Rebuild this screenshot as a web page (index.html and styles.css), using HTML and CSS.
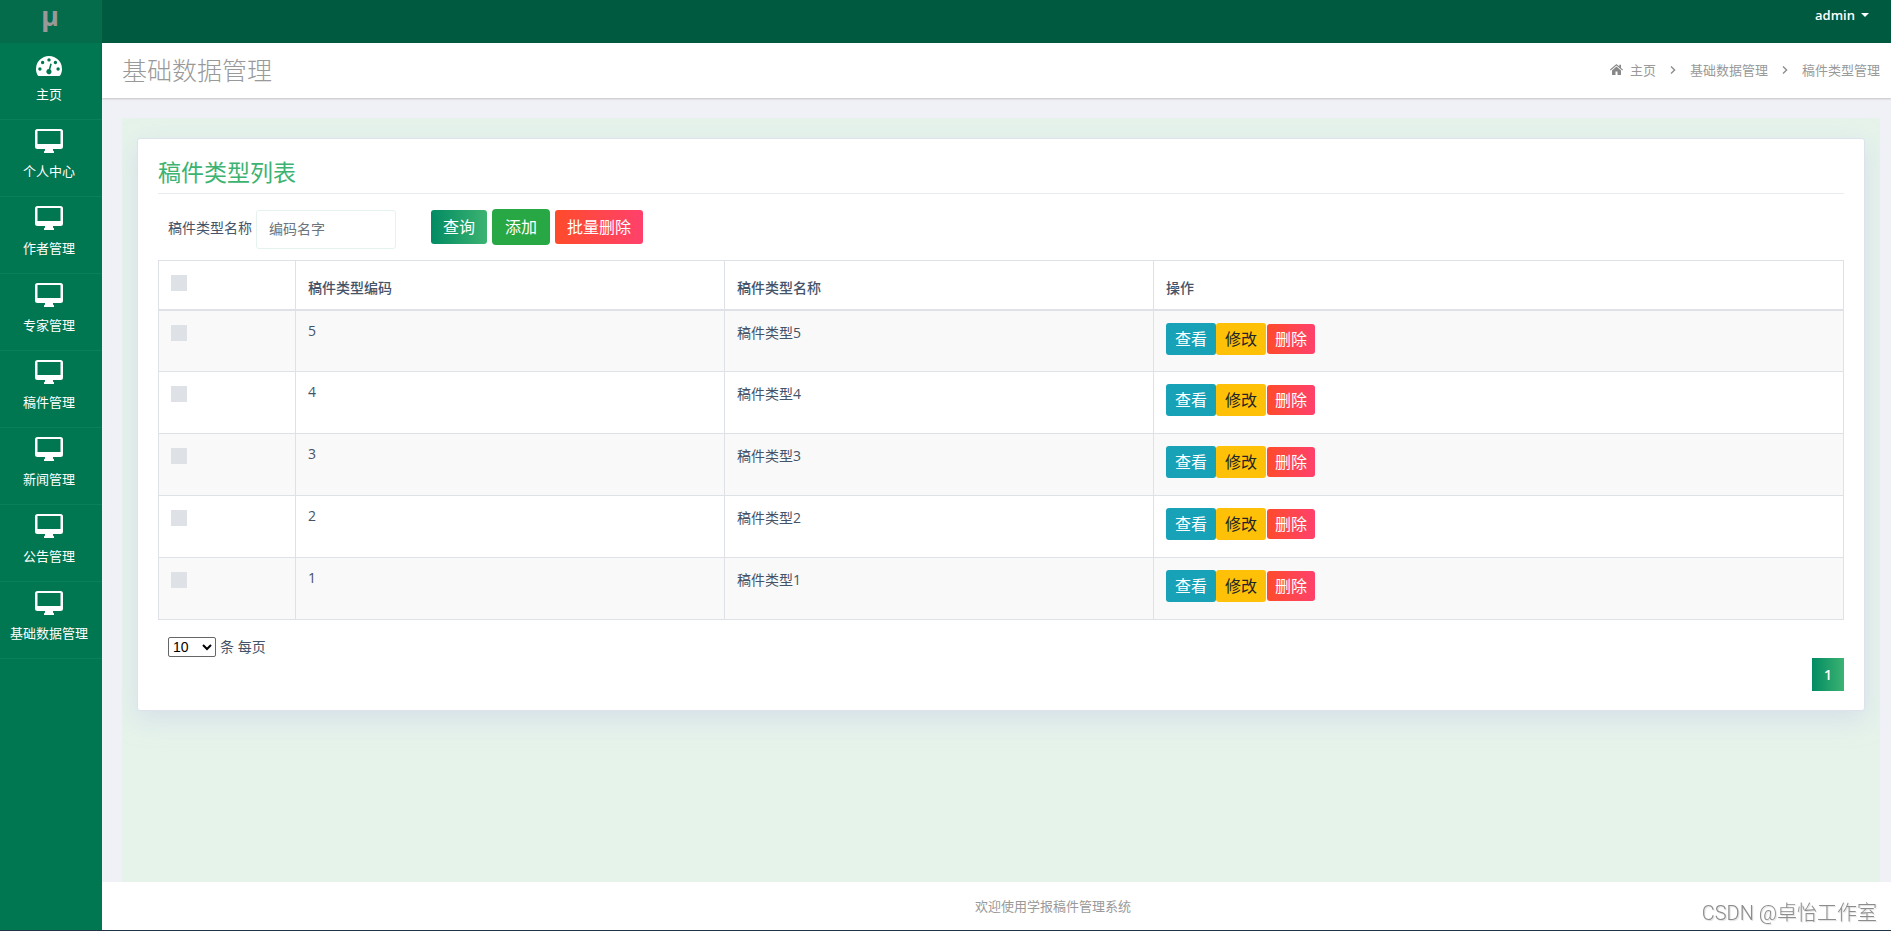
FILE: index.html
```
<!DOCTYPE html>
<html lang="zh-CN">
<head>
<meta charset="utf-8">
<title>稿件类型管理</title>
<link rel="stylesheet" href="styles.css">
</head>
<body>
<svg class="sprite" aria-hidden="true">
  <symbol id="monitor" viewBox="0 0 28 24"><path fill-rule="evenodd" d="M2.500 0h23a2.500 2.500 0 0 1 2.500 2.500v15a2.500 2.500 0 0 1-2.500 2.500H18v1.500l1 1V24H9v-1.500l1-1V20H2.500A2.500 2.500 0 0 1 0 17.500v-15A2.500 2.500 0 0 1 2.500 0zM2.500 2v13h23V2z"/></symbol>
  <symbol id="gauge" viewBox="0 0 26 20"><path fill-rule="evenodd" d="M13 0a13 13 0 0 1 13 13c0 2.600-.7 4.900-1.900 6.500-.2.300-.5.500-.9.500H2.800c-.4 0-.7-.2-.9-.5C.7 17.900 0 15.600 0 13A13 13 0 0 1 13 0zM13 2.200a1.700 1.700 0 1 0 0 3.400 1.700 1.700 0 0 0 0-3.400zM6.600 4.800a1.700 1.700 0 1 0 0 3.400 1.700 1.700 0 0 0 0-3.400zM19.400 4.800a1.700 1.700 0 1 0 0 3.400 1.700 1.700 0 0 0 0-3.400zM3.900 11.300a1.700 1.700 0 1 0 0 3.400 1.700 1.700 0 0 0 0-3.400zM22.100 11.300a1.700 1.700 0 1 0 0 3.400 1.700 1.700 0 0 0 0-3.400zM14.300 7.500l-1.500 5.600a2.600 2.600 0 1 0 1.500.4l1.500-5.600z"/></symbol>
</svg>
<div class="app">
  <aside class="sidebar">
    <div class="brand">µ</div>
    <nav>
      <a class="nav-item" href="#"><svg class="gauge"><use href="#gauge"/></svg><span>主页</span></a>
      <a class="nav-item" href="#"><svg><use href="#monitor"/></svg><span>个人中心</span></a>
      <a class="nav-item" href="#"><svg><use href="#monitor"/></svg><span>作者管理</span></a>
      <a class="nav-item" href="#"><svg><use href="#monitor"/></svg><span>专家管理</span></a>
      <a class="nav-item" href="#"><svg><use href="#monitor"/></svg><span>稿件管理</span></a>
      <a class="nav-item" href="#"><svg><use href="#monitor"/></svg><span>新闻管理</span></a>
      <a class="nav-item" href="#"><svg><use href="#monitor"/></svg><span>公告管理</span></a>
      <a class="nav-item" href="#"><svg><use href="#monitor"/></svg><span>基础数据管理</span></a>
    </nav>
  </aside>
  <div class="page">
    <header class="topbar"><button class="user" type="button">admin<i class="caret"></i></button></header>
    <div class="heading">
      <h1>基础数据管理</h1>
      <nav class="crumbs">
        <a class="home" href="#"><svg viewBox="0 0 13 11"><path d="M6.500 0 0 5.600l.7.8 5.800-5 5.800 5 .7-.8-2-1.700V.7H9.300v1.700zM6.500 2.500 2 6.400V11h3.500V7.500h2V11H11V6.400z"/></svg>主页</a>
        <svg class="sep" viewBox="0 0 6 8"><path d="m1 .5 3.600 3.500L1 7.500"/></svg>
        <a href="#">基础数据管理</a>
        <svg class="sep" viewBox="0 0 6 8"><path d="m1 .5 3.600 3.500L1 7.500"/></svg>
        <span>稿件类型管理</span>
      </nav>
    </div>
    <main class="content">
      <section class="card">
        <h2>稿件类型列表</h2>
        <form class="filters">
          <label for="name">稿件类型名称</label>
          <input id="name" type="text" placeholder="编码名字">
          <div class="buttons">
            <button class="btn query" type="button">查询</button>
            <button class="btn add" type="button">添加</button>
            <button class="btn danger" type="button">批量删除</button>
          </div>
        </form>
        <table>
          <colgroup><col class="c-check"><col class="c-text"><col class="c-text"><col></colgroup>
          <thead><tr><th><input type="checkbox" aria-label="全选"></th><th class="label">稿件类型编码</th><th class="label">稿件类型名称</th><th class="label">操作</th></tr></thead>
          <tbody>
            <tr><td><input type="checkbox" aria-label="选择 5"></td><td class="code">5</td><td>稿件类型5</td><td><div class="actions"><button class="act view" type="button">查看</button><button class="act edit" type="button">修改</button><button class="act remove" type="button">删除</button></div></td></tr>
            <tr><td><input type="checkbox" aria-label="选择 4"></td><td class="code">4</td><td>稿件类型4</td><td><div class="actions"><button class="act view" type="button">查看</button><button class="act edit" type="button">修改</button><button class="act remove" type="button">删除</button></div></td></tr>
            <tr><td><input type="checkbox" aria-label="选择 3"></td><td class="code">3</td><td>稿件类型3</td><td><div class="actions"><button class="act view" type="button">查看</button><button class="act edit" type="button">修改</button><button class="act remove" type="button">删除</button></div></td></tr>
            <tr><td><input type="checkbox" aria-label="选择 2"></td><td class="code">2</td><td>稿件类型2</td><td><div class="actions"><button class="act view" type="button">查看</button><button class="act edit" type="button">修改</button><button class="act remove" type="button">删除</button></div></td></tr>
            <tr><td><input type="checkbox" aria-label="选择 1"></td><td class="code">1</td><td>稿件类型1</td><td><div class="actions"><button class="act view" type="button">查看</button><button class="act edit" type="button">修改</button><button class="act remove" type="button">删除</button></div></td></tr>
          </tbody>
        </table>
        <div class="page-size"><select id="size"><option>10</option></select><label for="size">条 每页</label></div>
        <div class="pager"><button type="button">1</button></div>
      </section>
    </main>
    <footer class="footer">欢迎使用学报稿件管理系统</footer>
  </div>
</div>
<div class="watermark">CSDN @卓怡工作室</div>
<div class="edge"></div>
</body>
</html>
```
FILE: styles.css
```
* { box-sizing: border-box; }
body { margin: 0; font: 14px/20px "Open Sans", "Noto Sans CJK SC", sans-serif; color: #455368; background: #f0f1f6; }
button, input { font-family: inherit; }
a { color: inherit; text-decoration: none; }
.sprite { position: absolute; width: 0; height: 0; }
.app { display: flex; min-height: 100vh; }

.sidebar { width: 102px; flex: none; background: #007651; color: #fff; }
.brand { height: 43px; background: #046b4b; color: #999; font: bold 27px/32px "Noto Sans", sans-serif; text-align: center; padding-right: 2px; }
.nav-item { display: flex; flex-direction: column; align-items: center; gap: 8px; height: 77px; padding: 9px 4px 0 0; border-bottom: 1px solid #088058; font-size: 13px; white-space: nowrap; }
.nav-item svg { width: 28px; height: 24px; fill: #fff; }
.nav-item .gauge { width: 26px; height: 20px; margin: 4px 0 0; }

.page { flex: 1; min-width: 0; display: flex; flex-direction: column; }
.topbar { height: 43px; background: #005a40; display: flex; justify-content: flex-end; align-items: flex-start; padding: 5px 22px; }
.user { display: flex; align-items: center; gap: 6px; border: 0; padding: 0; background: none; color: #fff; font-size: 13px; font-weight: 600; line-height: 20px; }
.caret { border: 4px solid transparent; border-top-color: #fff; border-bottom: 0; }
.heading { display: flex; justify-content: space-between; align-items: center; height: 55px; padding: 0 11px 2px 20px; background: #fff; color: #999; box-shadow: 0 1px 2px rgba(0,0,0,.2); z-index: 1; }
h1 { margin: 0; font-size: 25px; line-height: 36px; font-weight: 300; }
.crumbs { display: flex; align-items: center; gap: 14px; font-size: 13px; }
.home { display: flex; align-items: center; gap: 7px; }
.home svg { width: 13px; height: 11px; fill: #888; }
.sep { width: 6px; height: 8px; fill: none; stroke: #888; stroke-width: 1.3; }

.content { flex: 1; margin: 20px 11px 0 20px; padding: 20px 15px 40px 15px; background: #e5f3eb; overflow: hidden; }
.card { padding: 19px 20px; background: #fff; border: 1px solid #dce3ec; border-radius: 3px; box-shadow: 0 8px 24px rgba(200,208,228,.55); }
h2 { margin: 0 0 15px; padding-bottom: 7px; border-bottom: 1px solid #e9ecef; color: #3cb371; font-size: 23px; line-height: 28px; font-weight: 400; }
.filters { display: flex; align-items: center; gap: 4px; padding-left: 10px; height: 40px; margin-bottom: 11px; }
.filters label { padding-bottom: 2px; }
.filters input { width: 140px; height: 39px; padding: 0 12px 2px; border: 1px solid #e5f3ee; border-radius: 3px; font-size: 14px; color: #455368; }
.filters input::placeholder { color: #6c757d; opacity: 1; }
.buttons { display: flex; align-items: center; gap: 5px; height: 36px; margin: 0 0 4px 31px; }
.btn { height: 34px; padding: 0 12px; border: 0; border-radius: 3px; color: #fff; font-size: 16px; line-height: 24px; }
.query { background: linear-gradient(90deg, #028b63, #3cb371); }
.btn.add { height: 36px; padding: 0 13px; background: #28a745; border-radius: 4px; }
.danger, .remove { background: linear-gradient(90deg, #ff4b2b, #ff416c); }

table { width: 100%; border-collapse: collapse; table-layout: fixed; }
.c-check { width: 137px; }
.c-text { width: 429px; }
th, td { border: 1px solid #dee2e6; vertical-align: top; text-align: left; padding: 12px 12px 0; }
th { height: 49px; border-bottom-width: 2px; }
th.label { padding-top: 17px; font-weight: 500; }
td { height: 62px; }
td.code { padding-top: 10px; }
tbody tr:nth-child(odd) { background: #f9f9f9; }
table input { appearance: none; display: block; width: 16px; height: 16px; margin: 2px 0 0; background: #dee2e6; }
.actions { display: flex; align-items: center; }
.act { border: 0; height: 32px; padding: 0 9px; border-radius: 3px; color: #fff; font-size: 16px; line-height: 24px; }
.view { background: #17a2b8; }
.edit { background: #ffc107; color: #212529; }
.act.remove { height: 30px; padding: 0 8px; margin-left: 1px; }

.page-size { display: flex; align-items: center; gap: 4px; margin: 17px 0 0 10px; }
select { width: 48px; height: 20px; border: 1px solid #666; border-radius: 2px; background: #fff; color: #000; font: 14px "Liberation Sans", sans-serif; padding: 0; }
.pager { display: flex; justify-content: flex-end; margin-top: 1px; }
.pager button { width: 32px; height: 33px; border: 0; padding: 0; background: linear-gradient(90deg, #028b63, #3cb371); color: #fff; font-size: 14px; font-weight: 600; }
.footer { height: 49px; padding-left: 113px; background: #fff; color: #999; font-size: 13px; line-height: 48px; text-align: center; }
.watermark { position: fixed; right: 14px; bottom: 4px; color: #8c8c8c; font: 300 20px/28px Roboto, "Noto Sans CJK SC", sans-serif; text-shadow: 1px 1px 1px #ddd; }
.edge { position: fixed; left: 0; right: 0; bottom: 0; height: 1px; background: #223344; }
```
